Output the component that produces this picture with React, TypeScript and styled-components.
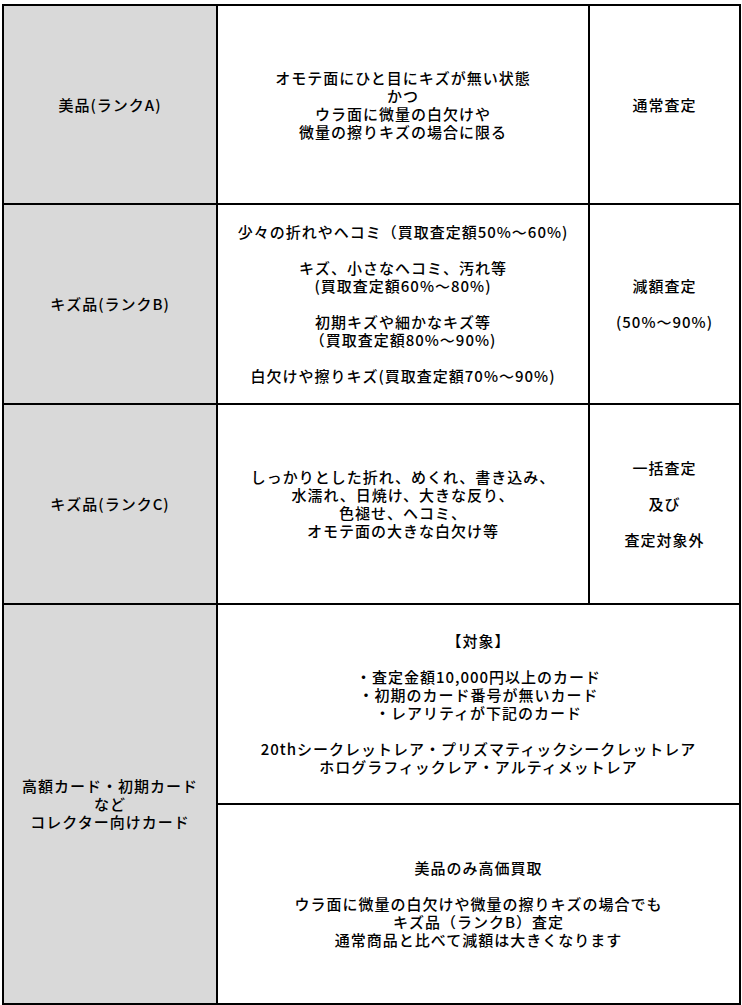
import React from "react";
import styled, { createGlobalStyle } from "styled-components";

const GlobalStyle = createGlobalStyle`
  html, body { margin: 0; padding: 0; background: #ffffff; }
  body {
    font-family: "Noto Sans CJK JP", "Noto Sans", sans-serif;
    color: #000000;
  }
`;

const Page = styled.div`
  padding: 4px 0 0 2px;
  width: 742px;
  box-sizing: border-box;
`;

const Table = styled.div`
  display: grid;
  grid-template-columns: 214px 372px 151px;
  grid-template-rows: 199px 200px 200px 200px 200px;
  border-top: 2px solid #000;
  border-left: 2px solid #000;
  width: max-content;
`;

const Cell = styled.div<{ $head?: boolean; $col?: string; $row?: string }>`
  box-sizing: border-box;
  border-right: 2px solid #000;
  border-bottom: 2px solid #000;
  background: ${(p) => (p.$head ? "#d9d9d9" : "#ffffff")};
  grid-column: ${(p) => p.$col ?? "auto"};
  grid-row: ${(p) => p.$row ?? "auto"};
  display: flex;
  flex-direction: column;
  align-items: center;
  justify-content: center;
  gap: 18px;
  text-align: center;
  font-size: 15px;
  line-height: 18px;
  font-weight: 500;
  letter-spacing: 1px;
  white-space: nowrap;
`;

const Para = styled.p`
  margin: 0;
`;

const Block: React.FC<{ lines: string[] }> = ({ lines }) => (
  <Para>
    {lines.map((l, i) => (
      <React.Fragment key={i}>
        {i > 0 && <br />}
        {l}
      </React.Fragment>
    ))}
  </Para>
);

export default function App() {
  return (
    <>
      <GlobalStyle />
      <Page>
        <Table>
          <Cell $head>
            <Block lines={["美品(ランクA)"]} />
          </Cell>
          <Cell>
            <Block
              lines={[
                "オモテ面にひと目にキズが無い状態",
                "かつ",
                "ウラ面に微量の白欠けや",
                "微量の擦りキズの場合に限る",
              ]}
            />
          </Cell>
          <Cell>
            <Block lines={["通常査定"]} />
          </Cell>

          <Cell $head>
            <Block lines={["キズ品(ランクB)"]} />
          </Cell>
          <Cell>
            <Block lines={["少々の折れやヘコミ（買取査定額50%～60%)"]} />
            <Block lines={["キズ、小さなヘコミ、汚れ等", "(買取査定額60%～80%)"]} />
            <Block lines={["初期キズや細かなキズ等", "（買取査定額80%～90%)"]} />
            <Block lines={["白欠けや擦りキズ(買取査定額70%～90%)"]} />
          </Cell>
          <Cell>
            <Block lines={["減額査定"]} />
            <Block lines={["(50%～90%)"]} />
          </Cell>

          <Cell $head>
            <Block lines={["キズ品(ランクC)"]} />
          </Cell>
          <Cell>
            <Block
              lines={[
                "しっかりとした折れ、めくれ、書き込み、",
                "水濡れ、日焼け、大きな反り、",
                "色褪せ、ヘコミ、",
                "オモテ面の大きな白欠け等",
              ]}
            />
          </Cell>
          <Cell>
            <Block lines={["一括査定"]} />
            <Block lines={["及び"]} />
            <Block lines={["査定対象外"]} />
          </Cell>

          <Cell $head $row="4 / span 2">
            <Block lines={["高額カード・初期カード", "など", "コレクター向けカード"]} />
          </Cell>
          <Cell $col="2 / span 2">
            <Block lines={["【対象】"]} />
            <Block
              lines={[
                "・査定金額10,000円以上のカード",
                "・初期のカード番号が無いカード",
                "・レアリティが下記のカード",
              ]}
            />
            <Block
              lines={[
                "20thシークレットレア・プリズマティックシークレットレア",
                "ホログラフィックレア・アルティメットレア",
              ]}
            />
          </Cell>
          <Cell $col="2 / span 2">
            <Block lines={["美品のみ高価買取"]} />
            <Block
              lines={[
                "ウラ面に微量の白欠けや微量の擦りキズの場合でも",
                "キズ品（ランクB）査定",
                "通常商品と比べて減額は大きくなります",
              ]}
            />
          </Cell>
        </Table>
      </Page>
    </>
  );
}
